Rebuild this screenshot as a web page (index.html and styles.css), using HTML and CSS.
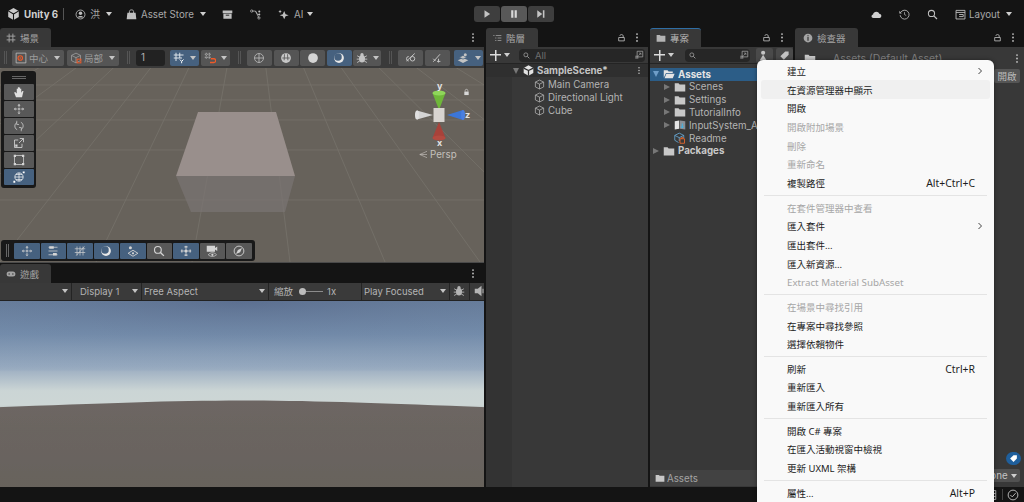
FILE: index.html
```html
<!DOCTYPE html>
<html>
<head>
<meta charset="UTF-8">
<title>Unity 6</title>
<link rel="stylesheet" href="styles.css">
</head>
<body>
	<svg class="defs" width="0" height="0">
		<symbol id="cube" viewBox="0 0 16 16"><path d="M8 1.500 14 4.500V11.500L8 14.500 2 11.500V4.500ZM2 4.500 8 7.500 14 4.500M8 7.500V14.500" fill="none" stroke="currentColor" stroke-width="1.100"/></symbol>
		<symbol id="folder" viewBox="0 0 16 16"><path d="M1 3H6L7.500 4.500H15V14H1Z" fill="currentColor"/></symbol>
		<symbol id="folderopen" viewBox="0 0 16 16"><path d="M1 13V3H6L7.500 4.500H13V6.500H4L1 13ZM4.500 7.500H15.500L13 13.500H2Z" fill="currentColor"/></symbol>
		<symbol id="lock" viewBox="0 0 16 16"><path d="M3 8H13V14H3ZM5 8V5C5 2 11 2 11 5" fill="none" stroke="currentColor" stroke-width="1.400"/></symbol>
		<symbol id="dots" viewBox="0 0 4 16"><circle cx="2" cy="3" r="1.300" fill="currentColor"/><circle cx="2" cy="8" r="1.300" fill="currentColor"/><circle cx="2" cy="13" r="1.300" fill="currentColor"/></symbol>
		<symbol id="move" viewBox="0 0 16 16"><path d="M8 1 10 3.500H6ZM8 15 10 12.500H6ZM1 8 3.500 6V10ZM15 8 12.500 6V10Z" fill="currentColor"/><path d="M8 4V6M8 10V12M4 8H6M10 8H12" stroke="currentColor"/><circle cx="8" cy="8" r="1.200" fill="currentColor"/></symbol>
		<symbol id="bug" viewBox="0 0 16 16"><ellipse cx="8" cy="9" rx="4" ry="5" fill="currentColor"/><circle cx="8" cy="3.500" r="2.200" fill="currentColor"/><path d="M1.500 5 5 7M14.500 5 11 7M1 9.500H5M15 9.500H11M1.500 14 5 12M14.500 14 11 12" stroke="currentColor" stroke-width="1.200"/></symbol>
		<symbol id="moon" viewBox="0 0 16 16"><circle cx="8" cy="8" r="6.500" fill="#e8e8e8"/><circle cx="6.700" cy="6.500" r="5" fill="#46617f"/></symbol>
		<symbol id="search" viewBox="0 0 16 16"><circle cx="6.500" cy="6.500" r="4.500" fill="none" stroke="currentColor" stroke-width="1.500"/><path d="M10 10 14.500 14.500" stroke="currentColor" stroke-width="1.800"/></symbol>
		<symbol id="pick" viewBox="0 0 16 16"><path d="M5 2H14V11H5Z" fill="none" stroke="currentColor" stroke-width="1.200"/><path d="M2 9H7V14H2Z" fill="currentColor" opacity=".6"/><path d="M7 9 11 5M8 5H11V8" fill="none" stroke="currentColor"/></symbol>
		<symbol id="layers" viewBox="0 0 16 16"><path d="M8 8 15 11 8 14.500 1 11Z" fill="currentColor"/><path d="M8 4.500 13 7 8 9.500 3 7Z" fill="currentColor" stroke="#46617f"/><circle cx="11" cy="3.500" r="2" fill="currentColor"/></symbol>
	</svg>

	<header class="topbar">
		<svg class="logo" viewBox="0 0 16 16"><path d="M8 .5 14.500 4.200V11.800L8 15.500 1.500 11.800V4.200Z" fill="#c9c9c9"/><path d="M8 8V15.500M8 8 1.500 4.200M8 8 14.500 4.200" stroke="#141414" stroke-width="1.300"/></svg>
		<b class="brand">Unity 6</b>
		<i class="vsep"></i>
		<svg class="ic user" viewBox="0 0 16 16"><circle cx="8" cy="8" r="6.500" fill="none" stroke="currentColor" stroke-width="1.200"/><circle cx="8" cy="6.300" r="2.500" fill="currentColor"/><path d="M3.500 12.500C5 9.500 11 9.500 12.500 12.500Z" fill="currentColor"/></svg>
		<span class="top-label account">洪</span><i class="caret light account-caret"></i>
		<svg class="ic bag" viewBox="0 0 16 16"><path d="M2 5.500H14L15 15H1Z" fill="currentColor"/><path d="M5 7V3.500C5 .5 11 .5 11 3.500V7" fill="none" stroke="currentColor" stroke-width="1.300"/></svg>
		<span class="top-label store">Asset Store</span><i class="caret light store-caret"></i>
		<svg class="ic archive" viewBox="0 0 16 16"><path d="M1 2H15V6H1ZM2 7H14V14H2Z" fill="currentColor"/><path d="M5.500 9H10.500" stroke="#141414" stroke-width="1.300"/></svg>
		<svg class="ic graph" viewBox="0 0 16 16"><path d="M3 3H8L11 8 14 8M8 3 13 13" fill="none" stroke="currentColor"/><circle cx="2.500" cy="3" r="1.700" fill="none" stroke="currentColor"/><circle cx="13.500" cy="3.500" r="1.500" fill="currentColor"/><circle cx="13.500" cy="8" r="1.500" fill="currentColor"/><circle cx="13" cy="13" r="1.700" fill="none" stroke="currentColor"/></svg>
		<svg class="ic spark" viewBox="0 0 16 16"><path d="M9 3 11 7.500 15.500 9 11 10.500 9 15 7 10.500 2.500 9 7 7.500Z" fill="currentColor"/><path d="M3 1 3.800 3 5.500 3.800 3.800 4.500 3 6.500 2.200 4.500 .5 3.800 2.200 3Z" fill="currentColor"/></svg>
		<span class="top-label ai">AI</span><i class="caret light ai-caret"></i>
		<div class="play-group">
			<a class="play-btn"><svg viewBox="0 0 16 16"><path d="M4 2 13 8 4 14Z" fill="#c4c4c4"/></svg></a>
			<a class="play-btn lit"><svg viewBox="0 0 16 16"><path d="M3.500 2H7V14H3.500ZM9 2H12.500V14H9Z" fill="#d8d8d8"/></svg></a>
			<a class="play-btn"><svg viewBox="0 0 16 16"><path d="M2 2 10 8 2 14ZM11 2H13.500V14H11Z" fill="#c4c4c4"/></svg></a>
		</div>
		<div class="top-right">
			<svg class="ic" viewBox="0 0 16 16"><path d="M3.500 13C0 13 0 8.500 3 8 3.500 3 11 2.500 12 7 16 7 16 13 12.500 13Z" fill="#d0d0d0"/></svg>
			<svg class="ic" viewBox="0 0 16 16"><path d="M2.500 5A6.500 6.500 0 1 1 1.700 9" fill="none" stroke="currentColor" stroke-width="1.200"/><path d="M.5 2.500 4 6.500 .5 6.500Z" fill="currentColor"/><path d="M8 4.500V8L10.500 9.500" fill="none" stroke="currentColor"/></svg>
			<svg class="ic" viewBox="0 0 16 16"><use href="#search"/></svg>
			<svg class="ic layout-ic" viewBox="0 0 16 16"><path d="M1.500 2H14.500V14.500H1.500ZM1.500 5H14.500M6 8H12M6 11H12V8" fill="none" stroke="currentColor" stroke-width="1.300"/></svg>
			<span class="top-label">Layout</span><i class="caret light layout-caret"></i>
		</div>
	</header>

	<main class="workspace">
		<section class="col-left">
			<div class="tabstrip">
				<div class="tab">
					<svg class="tab-ic" viewBox="0 0 16 16"><path d="M5 1V15M11 1V15M1 5H15M1 11H15" stroke="currentColor" stroke-width="1.500"/></svg>場景
				</div>
				<svg class="dots" viewBox="0 0 4 16"><use href="#dots"/></svg>
			</div>
			<div class="scene-toolbar">
				<i class="grip"></i>
				<a class="tbtn wide"><svg viewBox="0 0 16 16"><path d="M1.500 1.500H14.500V14.500H1.500Z" fill="none" stroke="#c4c4c4"/><circle cx="7" cy="8" r="3" fill="none" stroke="#f05a28" stroke-width="1.500"/><circle cx="7" cy="8" r="1" fill="#f05a28"/></svg>中心<i class="caret"></i></a>
				<a class="tbtn wide"><svg viewBox="0 0 16 16"><use href="#cube"/><rect x="9.500" y="9.500" width="5" height="5" fill="none" stroke="#f05a28" stroke-width="1.300"/></svg>局部<i class="caret"></i></a>
				<i class="grip"></i>
				<div class="num-input">1</div>
				<a class="tbtn split blue"><svg viewBox="0 0 16 16"><path d="M4 1V12M9 1V8M1 4H14M1 8H12" stroke="#dfe6ee" stroke-width="1.300" fill="none"/><path d="M9 10 11.500 12.500 14 10M11.500 12.500V15" stroke="#fff" stroke-width="1.300" fill="none"/></svg></a>
				<a class="tbtn arrow blue"><i class="caret"></i></a>
				<a class="tbtn split"><svg viewBox="0 0 16 16"><path d="M3 1V9M7 1V9M1 3H9M1 7H9" stroke="#c4c4c4" stroke-dasharray="2 1" fill="none"/><path d="M9 9H13A2.500 2.500 0 0 1 13 14H8" stroke="#f05a28" stroke-width="1.700" fill="none"/></svg></a>
				<a class="tbtn arrow"><i class="caret"></i></a>
				<i class="grip"></i>
				<a class="tbtn icon"><svg viewBox="0 0 16 16"><circle cx="8" cy="8" r="6" fill="none" stroke="currentColor"/><path d="M2 8H14M8 2V14" stroke="currentColor"/></svg></a>
				<a class="tbtn icon"><svg viewBox="0 0 16 16"><circle cx="8" cy="8" r="6.500" fill="#c8c8c8"/><path d="M3 8H13M6 3 5.500 11M10 3 10.500 11" stroke="#555" stroke-width="1.100"/></svg></a>
				<a class="tbtn icon"><svg viewBox="0 0 16 16"><circle cx="8" cy="8" r="6.500" fill="#d4d4d4"/></svg></a>
				<a class="tbtn icon blue"><svg viewBox="0 0 16 16"><use href="#moon"/></svg></a>
				<a class="tbtn split"><svg viewBox="0 0 16 16"><use href="#bug"/></svg></a>
				<a class="tbtn arrow narrow"><i class="caret"></i></a>
				<i class="grip"></i>
				<a class="tbtn icon"><svg viewBox="0 0 16 16"><path d="M2 12 13 2M5 12A3 3 0 0 1 5 6M10 6A3 3 0 0 1 10 12 3 3 0 0 1 10 6Z" fill="none" stroke="currentColor" stroke-width="1.300"/></svg></a>
				<a class="tbtn icon"><svg viewBox="0 0 16 16"><path d="M3 13 12 3M10 9V14M8 12.500H12.500M3 9 6 12" fill="none" stroke="currentColor" stroke-width="1.300"/></svg></a>
				<a class="tbtn split blue last"><svg viewBox="0 0 16 16"><use href="#layers"/></svg></a>
				<a class="tbtn arrow blue"><i class="caret"></i></a>
			</div>
			<div class="viewport">
				<svg class="scene-art" viewBox="0 0 484 195" preserveAspectRatio="none">
					<g stroke="#76726b" stroke-width=".8" fill="none">
						<path d="M0 17H484M0 32H484M0 52H484M0 82H484M0 132H484"/>
						<path d="M250 -128 -470 194M250 -128 -376 194M250 -128 -282 194M250 -128 -188 194M250 -128 -94 194M250 -128 0 194M250 -128 96 194M250 -128 192 194M250 -128 290 194M250 -128 385 194M250 -128 480 194M250 -128 575 194M250 -128 670 194M250 -128 770 194M250 -128 880 194M250 -128 1000 194"/>
					</g>
					<path d="M198 44H276L295 108H176Z" fill="#998f8c"/>
					<path d="M176 108H295L285 144H191Z" fill="#7a7573" opacity=".7"/>
				</svg>

				<div class="tool-strip">
					<i class="strip-grip"></i>
					<a class="tool"><svg viewBox="0 0 16 16"><path d="M4 15 1.500 8.500 3 8 5 10V3.500H6.500V8V1.500H8V8V2H9.500V8V3.500H11V9L12.500 6.500H14L12 15Z" fill="#e0e0e0"/></svg></a>
					<a class="tool"><svg viewBox="0 0 16 16"><use href="#move"/></svg></a>
					<a class="tool"><svg viewBox="0 0 16 16"><path d="M5 3.500A5.500 5.500 0 0 0 5.500 13M11 12.500A5.500 5.500 0 0 0 10.500 3" fill="none" stroke="currentColor" stroke-width="1.100"/><path d="M5 1V6H8M11 15V10H8" fill="none" stroke="currentColor" stroke-width=".9"/></svg></a>
					<a class="tool"><svg viewBox="0 0 16 16"><path d="M2 4H7M2 4V14H12V9M9 2H14V7M14 2 8 8" fill="none" stroke="currentColor" stroke-width="1.100"/><rect x="3" y="10" width="3" height="3" fill="currentColor"/></svg></a>
					<a class="tool"><svg viewBox="0 0 16 16"><path d="M3 2H13M3 14H13M2 3V13M14 3V13" fill="none" stroke="currentColor"/><path d="M1 1H4V4H1ZM12 1H15V4H12ZM1 12H4V15H1ZM12 12H15V15H12Z" fill="currentColor"/></svg></a>
					<a class="tool on"><svg viewBox="0 0 16 16"><circle cx="8" cy="8" r="5.500" fill="none" stroke="#fff"/><path d="M8 2.500V13.500M2.500 8H13.500M4 4.500H12M4 11.500H12" stroke="#fff" stroke-width=".9"/><path d="M13 .5H15.500V3H13ZM.5 13H3V15.500H.5Z" fill="#fff"/></svg></a>
				</div>

				<svg class="gizmo" viewBox="0 0 60 72">
					<path d="M23.500 12H36.500L30 29Z" fill="#6fb73a"/><ellipse cx="30" cy="12" rx="6.500" ry="2.500" fill="#8fd65a"/>
					<path d="M23.500 57H36.500L30 41Z" fill="#a8423a"/><ellipse cx="30" cy="57" rx="6.500" ry="2.500" fill="#b34a40"/>
					<path d="M54 29V39L38 34Z" fill="#3c76d8"/><ellipse cx="54" cy="34" rx="2" ry="5" fill="#4a7fe0"/>
					<path d="M8 29.500V38.500L24 34Z" fill="#d4d4d4"/><ellipse cx="8" cy="34" rx="2" ry="4.500" fill="#e0e0e0"/>
					<rect x="24.500" y="27" width="11" height="14" fill="#d8d4d0"/>
				</svg>
				<span class="axis ax-y">y</span><span class="axis ax-z">z</span><span class="axis ax-x">x</span>
				<svg class="gizmo-lock" viewBox="0 0 16 16"><path d="M3 7H13V15H3Z" fill="#d8d8d8"/><path d="M5 7V4.500C5 1 11 1 11 4.500V7" fill="none" stroke="#d8d8d8" stroke-width="1.500"/></svg>
				<div class="persp"><svg viewBox="0 0 10 8"><path d="M10 0 1 4 10 8M1 4H10" fill="none" stroke="#c4c0bb" stroke-width=".8"/></svg>Persp</div>

				<div class="overlay-strip">
					<i class="strip-grip vert"></i>
					<a class="otool on"><svg viewBox="0 0 16 16"><use href="#move"/></svg></a>
					<a class="otool on"><svg viewBox="0 0 16 16"><path d="M2 3H14M2 8H14M2 13H14" stroke="currentColor"/><path d="M3 1.500H9V5H3ZM8 10.500H13V14H8Z" fill="currentColor"/></svg></a>
					<a class="otool on"><svg viewBox="0 0 16 16"><path d="M4 2V14M8 2V14M12 2V14M1 5H15M1 10H15M3 14 14 2" stroke="currentColor" stroke-width=".9" fill="none"/></svg></a>
					<a class="otool on"><svg viewBox="0 0 16 16"><use href="#moon"/></svg></a>
					<a class="otool on"><svg viewBox="0 0 16 16"><path d="M8 7 14.500 11 8 15 1.500 11Z" fill="none" stroke="currentColor" stroke-width="1.200"/><circle cx="8" cy="11" r="1.500" fill="currentColor"/><circle cx="4.500" cy="3.500" r="2" fill="currentColor"/></svg></a>
					<a class="otool"><svg viewBox="0 0 16 16"><use href="#search"/></svg></a>
					<a class="otool on"><svg viewBox="0 0 16 16"><circle cx="8" cy="8" r="2" fill="currentColor"/><path d="M8 1V14.500M1 8H15" stroke="currentColor"/><path d="M6 2.500H10M6 13.500H10M2.500 6V10M13.500 6V10" stroke="currentColor" stroke-width="1.500"/></svg></a>
					<a class="otool"><svg viewBox="0 0 16 16"><path d="M1 1H12V9H1Z" fill="currentColor"/><path d="M12 4 15 2V8L12 6Z" fill="currentColor"/><path d="M3 13C6 9.500 11 9.500 14 13 11 16 6 16 3 13Z" fill="#585858" stroke="currentColor"/><circle cx="8.500" cy="13" r="1.500" fill="currentColor"/></svg></a>
					<a class="otool"><svg viewBox="0 0 16 16"><circle cx="8" cy="8" r="6.500" fill="none" stroke="currentColor" stroke-width="1.200"/><path d="M12 4 9.500 9.500 4 12 6.500 6.500Z" fill="currentColor"/></svg></a>
				</div>
			</div>

			<div class="tabstrip game-strip">
				<div class="tab">
					<svg class="tab-ic" viewBox="0 0 16 16"><rect x="1" y="4" width="14" height="8" rx="4" fill="currentColor"/><circle cx="5" cy="8" r="1.200" fill="#383838"/><circle cx="11" cy="8" r="1.200" fill="#383838"/></svg>遊戲
				</div>
				<svg class="dots" viewBox="0 0 4 16"><use href="#dots"/></svg>
			</div>
			<div class="game-toolbar">
				<div class="gseg g-first"><i class="caret"></i></div>
				<div class="gseg g-display"><span>Display 1</span><i class="caret"></i></div>
				<div class="gseg g-aspect"><span>Free Aspect</span><i class="caret"></i></div>
				<div class="gseg g-scale"><span>縮放</span><i class="knob"></i><i class="track"></i><span>1x</span></div>
				<div class="gseg g-focus"><span>Play Focused</span><i class="caret"></i></div>
				<div class="gseg g-bug"><svg viewBox="0 0 16 16"><use href="#bug"/></svg></div>
				<div class="gseg g-sound"><svg viewBox="0 0 16 16"><path d="M1 5H5L10 1V15L5 11H1Z" fill="currentColor"/><path d="M12 5V11" stroke="currentColor" stroke-width="1.400"/></svg></div>
			</div>
			<div class="game-view">
				<svg viewBox="0 0 484 187" preserveAspectRatio="none">
					<defs>
						<linearGradient id="sky" x1="0" y1="0" x2="0" y2="1">
							<stop offset="0" stop-color="#627795"/>
							<stop offset=".3" stop-color="#7189a8"/>
							<stop offset=".6" stop-color="#99abc0"/>
							<stop offset=".82" stop-color="#cbd5d5"/>
							<stop offset=".95" stop-color="#cdd6d5"/>
							<stop offset="1" stop-color="#b6c0bf"/>
						</linearGradient>
						<radialGradient id="shade" cx=".5" cy="0" r=".75">
							<stop offset="0" stop-color="#57698c" stop-opacity=".55"/>
							<stop offset="1" stop-color="#7f99b5" stop-opacity=".15"/>
						</radialGradient>
						<linearGradient id="ground" x1="0" y1="0" x2="0" y2="1">
							<stop offset="0" stop-color="#6d6663"/>
							<stop offset="1" stop-color="#66625b"/>
						</linearGradient>
						<filter id="soft" x="-5%" y="-5%" width="110%" height="110%"><feGaussianBlur stdDeviation=".7"/></filter>
					</defs>
					<rect width="484" height="110" fill="url(#sky)"/>
					<rect width="484" height="70" fill="url(#shade)"/>
					<path d="M-10 107C100 103 170 100 242 100 314 100 384 103 494 107V200H-10Z" fill="url(#ground)" filter="url(#soft)"/>
				</svg>
			</div>
		</section>

		<section class="col-hier">
			<div class="tabstrip">
				<div class="tab hier-tab">
					<svg class="tab-ic" viewBox="0 0 16 16"><path d="M2 4H4M6 4H15M5 8H7M9 8H15M5 12H7M9 12H15" stroke="currentColor" stroke-width="1.200"/></svg>階層
				</div>
				<svg class="lock" viewBox="0 0 16 16"><use href="#lock"/></svg>
				<svg class="dots" viewBox="0 0 4 16"><use href="#dots"/></svg>
			</div>
			<div class="search-row">
				<i class="plus"></i><i class="caret light"></i>
				<div class="searchbox">
					<svg class="s-ic" viewBox="0 0 16 16"><use href="#search"/></svg>
					<span class="ph">All</span>
					<svg class="s-pick" viewBox="0 0 16 16"><use href="#pick"/></svg>
				</div>
			</div>
			<div class="tree">
				<div class="scene-row">
					<i class="tri down"></i>
					<svg class="scene-ic" viewBox="0 0 16 16"><path d="M8 .5 15 4.500V11.500L8 15.500 1 11.500V4.500Z" fill="#e2e2e2"/><path d="M8 8V15.500M8 8 1 4.500M8 8 15 4.500" stroke="#2c2c2c" stroke-width="1.800"/></svg>
					<b>SampleScene*</b>
					<svg class="dots" viewBox="0 0 4 16"><use href="#dots"/></svg>
				</div>
				<div class="go-row"><svg viewBox="0 0 16 16"><use href="#cube"/></svg>Main Camera</div>
				<div class="go-row"><svg viewBox="0 0 16 16"><use href="#cube"/></svg>Directional Light</div>
				<div class="go-row"><svg viewBox="0 0 16 16"><use href="#cube"/></svg>Cube</div>
			</div>
		</section>

		<section class="col-proj">
			<div class="tabstrip">
				<div class="tab proj-tab">
					<svg class="tab-ic" viewBox="0 0 16 16"><use href="#folder"/></svg>專案
				</div>
				<svg class="lock" viewBox="0 0 16 16"><use href="#lock"/></svg>
				<svg class="dots" viewBox="0 0 4 16"><use href="#dots"/></svg>
			</div>
			<div class="search-row proj-search">
				<i class="plus"></i><i class="caret light"></i>
				<div class="searchbox">
					<svg class="s-ic" viewBox="0 0 16 16"><use href="#search"/></svg>
					<svg class="s-pick" viewBox="0 0 16 16"><use href="#pick"/></svg>
				</div>
				<a class="mini"><svg viewBox="0 0 16 16"><circle cx="6" cy="4" r="3" fill="#c4c4c4"/><path d="M1 15 6 7 11 15Z" fill="#c4c4c4"/></svg></a>
				<a class="mini"><svg viewBox="0 0 16 16"><path d="M2 9 9 2H14V7L7 14Z" fill="#c4c4c4"/></svg></a>
			</div>
			<div class="assets">
				<div class="asset selected"><i class="tri down blue-tri"></i><svg viewBox="0 0 16 16"><use href="#folderopen"/></svg><b>Assets</b></div>
				<div class="asset sub"><i class="tri right"></i><svg viewBox="0 0 16 16"><use href="#folder"/></svg>Scenes</div>
				<div class="asset sub"><i class="tri right"></i><svg viewBox="0 0 16 16"><use href="#folder"/></svg>Settings</div>
				<div class="asset sub"><i class="tri right"></i><svg viewBox="0 0 16 16"><use href="#folder"/></svg>TutorialInfo</div>
				<div class="asset sub"><i class="tri right"></i><svg viewBox="0 0 16 16"><path d="M1 3 7 2V13L1 14Z" fill="#e4e4e4"/><path d="M8 2 15 3V14L8 13Z" fill="#8a8f96"/><path d="M11 6V12M9.500 10 11 12 12.500 10" fill="none" stroke="#3fb6e8" stroke-width="1.300"/></svg>InputSystem_Actions</div>
				<div class="asset sub leaf"><svg viewBox="0 0 16 16"><path d="M7 1.500 13 4.500V8M7 1.500 1 4.500V11L6 14M1 4.500 7 7.500 13 4.500M7 7.500V12" fill="none" stroke="#67a9d6" stroke-width="1.100"/><path d="M8 9H14V15H8ZM10 9V7.500H12V9" fill="none" stroke="#e4662e" stroke-width="1.200"/></svg>Readme</div>
				<div class="asset"><i class="tri right"></i><svg viewBox="0 0 16 16"><use href="#folder"/></svg><b>Packages</b></div>
			</div>
			<div class="path-bar"><svg viewBox="0 0 16 16"><use href="#folder"/></svg>Assets</div>
		</section>

		<section class="col-insp">
			<div class="tabstrip">
				<div class="tab insp-tab">
					<svg class="tab-ic" viewBox="0 0 16 16"><circle cx="8" cy="8" r="7" fill="currentColor"/><path d="M8 6.500V12.500M8 3.500V5" stroke="#383838" stroke-width="2"/></svg>檢查器
				</div>
				<svg class="lock" viewBox="0 0 16 16"><use href="#lock"/></svg>
				<svg class="dots" viewBox="0 0 4 16"><use href="#dots"/></svg>
			</div>
			<div class="insp-head">
				<svg viewBox="0 0 16 16"><use href="#folder"/></svg>
				<span>Assets (Default Asset)</span>
				<svg class="dots" viewBox="0 0 4 16"><use href="#dots"/></svg>
			</div>
			<div class="insp-actions"><a>開啟</a></div>
			<div class="insp-body"></div>
			<div class="tag-row"><span class="tag-dot"><svg viewBox="0 0 16 16"><path d="M2 8 8 2H14V8L8 14Z" fill="#fff"/></svg></span></div>
			<div class="bundle-row"><a>None<i class="caret light"></i></a></div>
		</section>
	</main>

	<footer class="statusbar">
		<svg viewBox="0 0 16 16"><path d="M3 2H13V14H3ZM3 6H13M3 10H13" fill="none" stroke="#b0b0b0" stroke-width="1.300"/></svg>
		<i class="status-sep"></i>
		<svg viewBox="0 0 16 16"><circle cx="8" cy="8" r="6.500" fill="none" stroke="#c4c4c4" stroke-width="1.200"/><path d="M4.500 8 7 10.500 11.500 5.500" fill="none" stroke="#c4c4c4" stroke-width="1.200"/></svg>
	</footer>

	<div class="context-menu">
		<div class="mi sub-item">建立<svg viewBox="0 0 8 10"><path d="M2 1 6 5 2 9" fill="none" stroke="currentColor" stroke-width="1.100"/></svg></div>
		<div class="mi hover">在資源管理器中顯示</div>
		<div class="mi">開啟</div>
		<div class="mi off">開啟附加場景</div>
		<div class="mi off">刪除</div>
		<div class="mi off">重新命名</div>
		<div class="mi">複製路徑<kbd>Alt+Ctrl+C</kbd></div>
		<hr>
		<div class="mi off">在套件管理器中查看</div>
		<div class="mi sub-item">匯入套件<svg viewBox="0 0 8 10"><path d="M2 1 6 5 2 9" fill="none" stroke="currentColor" stroke-width="1.100"/></svg></div>
		<div class="mi">匯出套件...</div>
		<div class="mi">匯入新資源...</div>
		<div class="mi off latin">Extract Material SubAsset</div>
		<hr>
		<div class="mi off">在場景中尋找引用</div>
		<div class="mi">在專案中尋找參照</div>
		<div class="mi">選擇依賴物件</div>
		<hr>
		<div class="mi">刷新<kbd>Ctrl+R</kbd></div>
		<div class="mi">重新匯入</div>
		<div class="mi">重新匯入所有</div>
		<hr>
		<div class="mi">開啟 C# 專案</div>
		<div class="mi">在匯入活動視窗中檢視</div>
		<div class="mi">更新 UXML 架構</div>
		<hr>
		<div class="mi">屬性...<kbd>Alt+P</kbd></div>
	</div>
</body>
</html>
```

FILE: styles.css
```css
* {
	box-sizing: border-box;
}
html, body {
	margin: 0;
	height: 502px;
	overflow: hidden;
}
body {
	position: relative;
	width: 1024px;
	background: #141414;
	color: #b4b4b4;
	font-family: "Inter", "Noto Sans CJK TC", sans-serif;
	font-size: 9.750px;
}
i, a {
	display: block;
	font-style: normal;
}
.defs {
	position: absolute;
}

/* top bar */
.topbar {
	display: flex;
	align-items: center;
	height: 28px;
	padding-left: 7px;
	color: #c0c0c0;
}
.logo {
	width: 13px;
	height: 14px;
}
.brand {
	margin-left: 4px;
	color: #d0d0d0;
}
.vsep {
	width: 1px;
	height: 12px;
	margin-left: 5px;
	background: #555;
}
.ic {
	width: 11px;
	height: 11px;
	flex: none;
}
.top-label {
	color: #a8a8a8;
}
.user {
	margin-left: 11px;
}
.account {
	margin-left: 4px;
}
.account-caret {
	margin-left: 6px;
}
.bag {
	margin-left: 14px;
}
.store {
	margin-left: 4px;
}
.store-caret {
	margin-left: 6px;
}
.archive {
	margin-left: 16px;
}
.graph {
	margin-left: 17px;
}
.spark {
	margin-left: 17px;
}
.ai {
	margin-left: 5px;
}
.ai-caret {
	margin-left: 4px;
}
.play-group {
	display: flex;
	gap: 1px;
	margin-left: 161px;
}
.play-btn {
	display: flex;
	align-items: center;
	justify-content: center;
	width: 26px;
	height: 16px;
	background: #3e3e3e;
	border-radius: 3px;
}
.play-btn.lit {
	background: #585858;
}
.play-btn svg {
	width: 10px;
	height: 10px;
}
.top-right {
	display: flex;
	align-items: center;
	gap: 17px;
	margin-left: auto;
	padding-right: 12px;
}
.layout-ic {
	margin-right: -14px;
}
.layout-caret {
	margin-left: -11px;
}
.caret {
	width: 0;
	height: 0;
	flex: none;
	border-left: 3.500px solid transparent;
	border-right: 3.500px solid transparent;
	border-top: 4px solid #c4c4c4;
}
.caret.light {
	border-top-color: #cfcfcf;
}

/* panels */
.workspace {
	display: flex;
	gap: 2px;
	height: 459px;
}
.col-left {
	display: flex;
	flex-direction: column;
	width: 484px;
}
.col-hier {
	display: flex;
	flex-direction: column;
	width: 162px;
	background: #383838;
}
.col-proj {
	display: flex;
	flex-direction: column;
	width: 143px;
	background: #383838;
}
.col-insp {
	display: flex;
	flex-direction: column;
	flex: 1;
	background: #383838;
}
.tabstrip {
	display: flex;
	align-items: center;
	flex: none;
	height: 19px;
	background: #141414;
}
.tab {
	display: flex;
	align-items: center;
	gap: 4px;
	width: 51px;
	height: 19px;
	padding-left: 6px;
	background: #383838;
	border-radius: 3px 3px 0 0;
	color: #a4a4a4;
	font-size: 9.500px;
}
.tab-ic {
	width: 10px;
	height: 10px;
	flex: none;
}
.hier-tab {
	width: 52px;
}
.proj-tab {
	border-top: 1.500px solid #2f6ea5;
	color: #b4b4b4;
}
.insp-tab {
	width: 63px;
	padding-left: 8px;
}
.dots {
	width: 4px;
	height: 11px;
	margin-left: auto;
	margin-right: 9px;
	color: #c4c4c4;
}
.lock {
	width: 9px;
	height: 9px;
	margin-left: auto;
	color: #c4c4c4;
	transform: scaleX(-1);
}
.lock + .dots {
	margin-left: 9px;
}

/* scene */
.scene-toolbar {
	display: flex;
	align-items: center;
	flex: none;
	gap: 1px;
	height: 21px;
	background: #3a3a3a;
	overflow: hidden;
}
.grip {
	width: 3px;
	height: 13px;
	margin: 0 5px;
	border-left: 1px solid #555;
	border-right: 1px solid #555;
}
.grip:first-child {
	margin: 0 4px;
}
.tbtn.arrow + .grip {
	margin-left: 6px;
}
.tbtn {
	display: flex;
	align-items: center;
	justify-content: center;
	gap: 2px;
	height: 16px;
	background: #555;
	color: #c4c4c4;
	border-radius: 2px;
	font-size: 9.500px;
}
.tbtn svg {
	width: 12px;
	height: 12px;
	flex: none;
}
.tbtn.wide {
	width: 52px;
	margin-right: 2px;
	justify-content: flex-start;
	padding-left: 3px;
	color: #9c9c9c;
}
.tbtn.wide .caret {
	margin-left: 4px;
}
.tbtn.split {
	width: 18px;
	margin-right: -1px;
	border-radius: 2px 0 0 2px;
}
.tbtn.arrow {
	width: 11px;
	margin-right: 1px;
	border-radius: 0 2px 2px 0;
}
.tbtn.arrow.narrow {
	width: 10px;
}
.tbtn.icon {
	width: 25px;
	margin-right: .6px;
}
.tbtn.last {
	margin-left: 2.500px;
}
.tbtn.blue {
	background: #46617f;
}
.num-input {
	width: 29px;
	height: 16px;
	margin-right: 4px;
	padding: 2px 0 0 5px;
	background: #222;
	border-radius: 3px;
	color: #b4b4b4;
}
.viewport {
	position: relative;
	flex: none;
	height: 195px;
	background: #67625b;
	overflow: hidden;
	border-bottom: 1px solid #4a4a4a;
}
.scene-art {
	display: block;
	width: 484px;
	height: 195px;
}
.tool-strip {
	position: absolute;
	left: 1px;
	top: 3px;
	display: flex;
	flex-direction: column;
	align-items: center;
	gap: 1px;
	width: 35px;
	height: 117px;
	background: #191919;
	border-radius: 3px;
}
.strip-grip {
	width: 14px;
	height: 3px;
	margin: 5px 0 4px;
	border-top: 1px solid #666;
	border-bottom: 1px solid #666;
}
.strip-grip.vert {
	width: 3px;
	height: 13px;
	margin: 0 4px 0 3px;
	border: 0;
	border-left: 1px solid #666;
	border-right: 1px solid #666;
}
.tool {
	display: flex;
	align-items: center;
	justify-content: center;
	width: 30px;
	height: 16px;
	background: #585858;
	border-radius: 1px;
	color: #d4d4d4;
}
.tool svg {
	width: 12px;
	height: 12px;
}
.tool.on {
	background: #46617f;
}
.overlay-strip {
	position: absolute;
	left: 1px;
	top: 172px;
	display: flex;
	align-items: center;
	gap: 1px;
	padding-left: 2px;
	width: 254px;
	height: 21px;
	background: #191919;
	border-radius: 3px;
}
.otool {
	display: flex;
	align-items: center;
	justify-content: center;
	width: 25.500px;
	height: 16px;
	background: #585858;
	border-radius: 1px;
	color: #d4d4d4;
}
.otool svg {
	width: 12px;
	height: 12px;
}
.otool.on {
	background: #46617f;
}
.gizmo {
	position: absolute;
	left: 409px;
	top: 13px;
	width: 60px;
	height: 72px;
}
.axis {
	position: absolute;
	color: #e4e4e4;
	font-size: 9px;
	font-weight: 700;
}
.ax-y {
	left: 437px;
	top: 12px;
}
.ax-z {
	left: 465px;
	top: 41px;
}
.ax-x {
	left: 437px;
	top: 69px;
}
.gizmo-lock {
	position: absolute;
	left: 463px;
	top: 20px;
	width: 7px;
	height: 8px;
}
.persp {
	position: absolute;
	left: 419px;
	top: 81px;
	display: flex;
	align-items: center;
	gap: 3px;
	color: #c4c0bb;
}
.persp svg {
	width: 8px;
	height: 7px;
}

/* game */
.game-strip {
	margin-top: 1px;
}
.game-toolbar {
	display: flex;
	align-items: center;
	flex: none;
	height: 18px;
	background: #3a3a3a;
	border-bottom: 1px solid #222;
	overflow: hidden;
	color: #b4b4b4;
	font-size: 9.500px;
}
.gseg {
	display: flex;
	align-items: center;
	flex: none;
	justify-content: space-between;
	height: 17px;
	padding: 0 3px 1px;
	border-right: 1px solid #242424;
}
.g-first {
	width: 72px;
	justify-content: flex-end;
}
.g-display {
	width: 70px;
	padding-left: 8px;
}
.g-aspect {
	width: 127px;
	padding-left: 2px;
}
.g-scale {
	width: 93px;
	padding-left: 5px;
	justify-content: flex-start;
}
.g-focus {
	width: 88px;
	padding-left: 2px;
}
.g-bug {
	width: 20px;
}
.g-bug svg, .g-sound svg {
	width: 12px;
	height: 12px;
}
.g-sound {
	width: 14px;
	border: 0;
	padding-left: 4px;
	overflow: hidden;
}
.g-sound svg {
	flex: none;
}
.knob {
	width: 7px;
	height: 7px;
	margin-left: 6px;
	background: #bcbcbc;
	border-radius: 50%;
}
.track {
	width: 17px;
	height: 1px;
	margin-right: 4px;
	background: #8c8c8c;
}
.game-view {
	flex: 1;
	min-height: 0;
}
.game-view svg {
	display: block;
	width: 100%;
	height: 100%;
}

/* hierarchy */
.search-row {
	display: flex;
	align-items: center;
	flex: none;
	gap: 3px;
	height: 17px;
	padding-left: 4px;
	border-bottom: 1px solid #242424;
}
.plus {
	width: 11px;
	height: 11px;
	flex: none;
	background:
		linear-gradient(#dcdcdc, #dcdcdc) center / 100% 1.500px no-repeat,
		linear-gradient(#dcdcdc, #dcdcdc) center / 1.500px 100% no-repeat;
}
.searchbox {
	display: flex;
	align-items: center;
	flex: 1;
	height: 13px;
	margin: 0 3px 0 6px;
	padding: 0 1px 0 4px;
	background: #262626;
	border-radius: 4px;
	color: #6e6e6e;
}
.s-ic {
	width: 7px;
	height: 7px;
	color: #b4b4b4;
}
.ph {
	margin-left: 5px;
	font-size: 9.500px;
}
.s-pick {
	width: 10px;
	height: 10px;
	margin-left: auto;
	color: #a4a4a4;
}
.tree {
	flex: 1;
	background: linear-gradient(90deg, #333 0 26px, #383838 26px);
}
.scene-row {
	display: flex;
	align-items: center;
	height: 13px;
	margin-bottom: 1px;
	background: #2f2f2f;
	padding-left: 27px;
	color: #c4c4c4;
}
.scene-row .dots {
	margin-right: 7px;
	height: 9px;
}
.tri {
	width: 0;
	height: 0;
	flex: none;
}
.tri.down {
	border-left: 3.500px solid transparent;
	border-right: 3.500px solid transparent;
	border-top: 6px solid #777;
}
.tri.right {
	border-top: 3.500px solid transparent;
	border-bottom: 3.500px solid transparent;
	border-left: 6px solid #777;
}
.scene-ic {
	width: 11px;
	height: 11px;
	margin: 0 3px 0 4px;
}
.go-row {
	display: flex;
	align-items: center;
	gap: 3px;
	height: 12.900px;
	padding-left: 48px;
	color: #b4b4b4;
}
.go-row svg {
	width: 11px;
	height: 11px;
	flex: none;
}

/* project */
.proj-search .searchbox {
	flex: none;
	width: 65px;
	margin: 0 3px 0 8px;
}
.mini {
	display: flex;
	align-items: center;
	justify-content: center;
	flex: none;
	width: 17px;
	height: 15px;
	background: #4a4a4a;
	border-radius: 2px;
}
.mini svg {
	width: 11px;
	height: 11px;
}
.assets {
	flex: 1;
	padding-top: 3.500px;
}
.asset {
	display: flex;
	align-items: center;
	height: 12.800px;
	padding-left: 3px;
	color: #b4b4b4;
	white-space: nowrap;
	overflow: hidden;
}
.asset svg {
	width: 12px;
	height: 12px;
	margin: 0 3px 0 4px;
	flex: none;
	color: #c8c8c8;
}
.asset.sub {
	padding-left: 14px;
}
.asset.leaf {
	padding-left: 20px;
}
.asset b {
	color: #c8c8c8;
}
.asset.selected {
	height: 13px;
	background: #2c5d87;
}
.asset.selected b, .asset.selected svg {
	color: #e4e4e4;
}
.blue-tri {
	border-top-color: #6f9ec8 !important;
}
.path-bar {
	display: flex;
	align-items: center;
	gap: 2px;
	flex: none;
	height: 16px;
	margin-bottom: 1px;
	padding-left: 5px;
	background: #424242;
	color: #a4a4a4;
}
.path-bar svg {
	width: 10px;
	height: 10px;
	color: #c8c8c8;
}

/* inspector */
.insp-head {
	display: flex;
	align-items: center;
	flex: none;
	height: 22px;
	padding-left: 9px;
	color: #7f7f7f;
}
.insp-head > svg:first-child {
	width: 12px;
	height: 13px;
	color: #c8c8c8;
}
.insp-head span {
	margin-left: 17px;
	font-size: 10.400px;
}
.insp-head .dots {
	margin-right: 5px;
}
.insp-actions {
	display: flex;
	justify-content: flex-end;
	flex: none;
	padding-right: 4px;
}
.insp-actions a {
	display: flex;
	align-items: center;
	justify-content: center;
	width: 26px;
	height: 14px;
	background: #555;
	border-radius: 2px;
	color: #bcbcbc;
	font-size: 9.500px;
}
.insp-body {
	flex: 1;
}
.tag-row {
	display: flex;
	justify-content: flex-end;
	flex: none;
	padding: 0 3px 4px 0;
}
.tag-dot {
	display: flex;
	align-items: center;
	justify-content: center;
	width: 15px;
	height: 13px;
	background: #1f5f9c;
	border-radius: 7px;
}
.tag-dot svg {
	width: 9px;
	height: 9px;
}
.bundle-row {
	display: flex;
	justify-content: flex-end;
	flex: none;
	height: 18px;
	padding: 0 4px 5px 0;
}
.bundle-row a {
	display: flex;
	align-items: center;
	justify-content: space-between;
	width: 40px;
	height: 13px;
	padding: 0 3px;
	background: #515151;
	border-radius: 2px;
	color: #c4c4c4;
}

/* status bar */
.statusbar {
	display: flex;
	align-items: center;
	justify-content: flex-end;
	gap: 4px;
	height: 15px;
	padding-right: 5px;
}
.statusbar svg {
	width: 12px;
	height: 12px;
}
.status-sep {
	width: 1px;
	height: 11px;
	background: #444;
}

/* context menu */
.context-menu {
	position: absolute;
	left: 757px;
	top: 60px;
	width: 237px;
	height: 460px;
	padding-top: 1.500px;
	background: #f9f9f9;
	border-radius: 6px 6px 0 0;
	box-shadow: 0 0 4px rgba(0, 0, 0, .4);
	color: #1c1c1c;
	font-family: "Noto Sans", "Noto Sans CJK TC", sans-serif;
	font-size: 9.500px;
}
.mi {
	display: flex;
	align-items: center;
	justify-content: space-between;
	height: 18.700px;
	padding: 0 19px 0 30px;
	white-space: nowrap;
}
.mi.off {
	color: #a6a6a6;
}
.mi.latin {
	font-size: 9.750px;
}
.mi.hover {
	margin: 0 4px;
	padding-left: 26px;
	background: #f0f0f0;
	border-radius: 3px;
}
.mi.sub-item {
	padding-right: 11px;
}
.mi svg {
	width: 6px;
	height: 8px;
}
.mi kbd {
	font-family: inherit;
	font-size: 10.400px;
}
.context-menu hr {
	height: 1px;
	margin: 2.450px 7px;
	background: #e4e4e4;
	border: 0;
}
```
